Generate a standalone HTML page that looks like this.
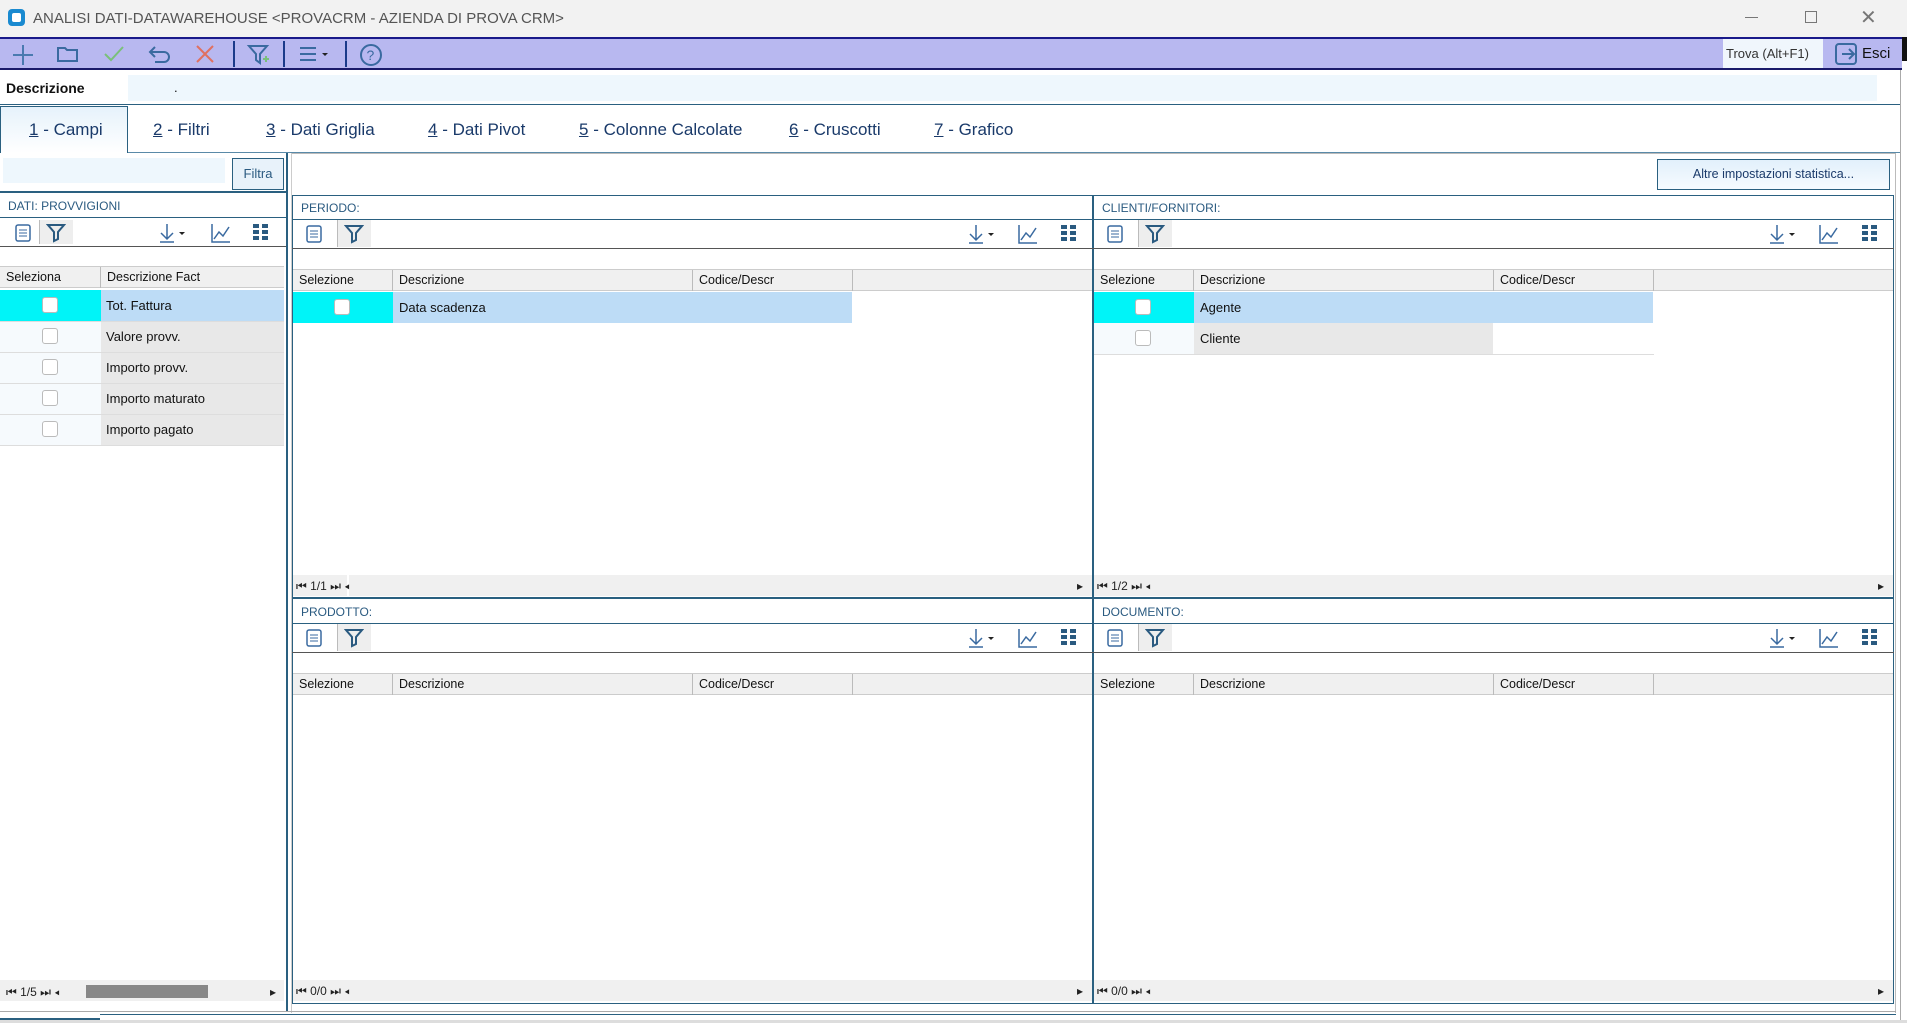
<!DOCTYPE html>
<html><head><meta charset="utf-8"><style>
*{margin:0;padding:0;box-sizing:border-box}
body{width:1907px;height:1023px;overflow:hidden;background:#fff;font-family:"Liberation Sans",sans-serif;font-size:13px;color:#111;position:relative}
.a{position:absolute}
.tb{left:0;top:0;width:1907px;height:37px;background:#f2f2f2}
.tool{left:0;top:37px;width:1902px;height:33px;background:#b8b8f0;border-top:2px solid #1a1a8a;border-bottom:2px solid #1a1a6a}
.tab{top:120px;font-size:17px;color:#1a3a6a}
.panel{border:1px solid #2a6080;background:#fff}
.ph{font-size:12px;color:#2a5a80}
.hd{background:#f0f0f0;border-top:1px solid #ccc;border-bottom:1px solid #ccc;height:22px}
.hc{position:absolute;top:0;height:21px;line-height:21px;padding-left:6px;border-right:1px solid #bbb;font-size:12.5px}
.cb{position:absolute;width:16px;height:16px;border:1px solid #bbb;border-radius:3px;background:#fff}
.nav{font-size:12px;color:#222}
svg{position:absolute}
</style></head><body>
<div class="a tb"></div>
<div class="a" style="left:8px;top:9px;width:17px;height:17px;background:#1a8ad0;border-radius:4px"><div style="margin:4px;width:9px;height:9px;background:#fff;border-radius:2px"></div></div>
<div class="a" style="left:33px;top:10px;font-size:15px;color:#555">ANALISI DATI-DATAWAREHOUSE &lt;PROVACRM - AZIENDA DI PROVA CRM&gt;</div>
<div class="a" style="left:1745px;top:17px;width:13px;height:1px;background:#777"></div>
<div class="a" style="left:1805px;top:11px;width:12px;height:12px;border:1px solid #777"></div>
<div class="a" style="left:1860px;top:5px;font-size:20px;color:#777">✕</div>
<div class="a tool"></div>
<div class="a" style="left:1902px;top:37px;width:5px;height:24px;background:#111"></div>
<div class="a" style="left:1900px;top:70px;width:1px;height:953px;background:#aaa"></div>
<svg style="left:10px;top:42px" width="26" height="26"><path d="M13 3v20M3 13h20" stroke="#4a7ab0" stroke-width="2"/></svg>
<svg style="left:56px;top:44px" width="24" height="20"><path d="M2 4h7l2 2h10v11H2z" fill="none" stroke="#3a6aa0" stroke-width="2"/></svg>
<svg style="left:102px;top:44px" width="24" height="20"><path d="M3 10l6 6 12-13" fill="none" stroke="#7ac07a" stroke-width="2"/></svg>
<svg style="left:147px;top:43px" width="26" height="22"><path d="M8 4L3 9l5 5M3 9h14a5 5 0 010 10H8" fill="none" stroke="#3a6aa0" stroke-width="2"/></svg>
<svg style="left:193px;top:42px" width="24" height="24"><path d="M4 4l16 16M20 4L4 20" stroke="#e07060" stroke-width="2"/></svg>
<div class="a" style="left:233px;top:41px;width:2px;height:26px;background:#1a3a8a"></div>
<svg style="left:246px;top:42px" width="26" height="26"><path d="M3 4h18l-7 8v9l-4-3v-6z" fill="none" stroke="#3a6aa0" stroke-width="2"/><path d="M20 14v6M17 17h6" stroke="#7ac07a" stroke-width="2"/></svg>
<div class="a" style="left:283px;top:41px;width:2px;height:26px;background:#1a3a8a"></div>
<svg style="left:298px;top:44px" width="34" height="20"><path d="M2 4h16M2 10h16M2 16h16" stroke="#3a6aa0" stroke-width="2"/><path d="M24 9h6l-3 3z" fill="#222"/></svg>
<div class="a" style="left:345px;top:41px;width:2px;height:26px;background:#1a3a8a"></div>
<svg style="left:358px;top:42px" width="26" height="26"><circle cx="13" cy="13" r="10" fill="none" stroke="#3a6aa0" stroke-width="2"/><text x="8.5" y="18" font-size="14" fill="#3a6aa0" font-family="Liberation Sans">?</text></svg>
<div class="a" style="left:1723px;top:39px;width:100px;height:29px;background:#f0f6fc;font-size:13px;color:#333;line-height:29px;padding-left:3px">Trova (Alt+F1)</div>
<svg style="left:1834px;top:42px" width="24" height="24"><rect x="2" y="2" width="20" height="20" rx="3" fill="none" stroke="#3a6aa0" stroke-width="2"/><path d="M8 12h12M15 7l5 5-5 5" fill="none" stroke="#3a6aa0" stroke-width="2"/></svg>
<div class="a" style="left:1862px;top:45px;font-size:15px;color:#111">Esci</div>
<div class="a" style="left:0;top:71px;width:1900px;height:34px;border-bottom:1px solid #2a6080"></div>
<div class="a" style="left:6px;top:80px;font-size:14px;font-weight:bold">Descrizione</div>
<div class="a" style="left:128px;top:75px;width:1749px;height:26px;background:#eef7fd"></div>
<div class="a" style="left:174px;top:80px">.</div>
<div class="a" style="left:0;top:106px;width:128px;height:47px;border:1px solid #2a6080;border-bottom:none;background:linear-gradient(#e6f2fb,#fff)"></div>
<div class="a" style="top:152px;height:1px;background:#5a8aa8;left:128px;width:1772px"></div>
<div class="a tab" style="left:29px"><u>1</u> - Campi</div>
<div class="a tab" style="left:153px"><u>2</u> - Filtri</div>
<div class="a tab" style="left:266px"><u>3</u> - Dati Griglia</div>
<div class="a tab" style="left:428px"><u>4</u> - Dati Pivot</div>
<div class="a tab" style="left:579px"><u>5</u> - Colonne Calcolate</div>
<div class="a tab" style="left:789px"><u>6</u> - Cruscotti</div>
<div class="a tab" style="left:934px"><u>7</u> - Grafico</div>
<div class="a" style="left:3px;top:158px;width:196px;height:25px;background:#eef7fd;width:222px"></div>
<div class="a" style="left:232px;top:158px;width:52px;height:32px;border:1px solid #2a6080;background:#e8f2fa;color:#2a5a80;font-size:13px;text-align:center;line-height:30px">Filtra</div>
<div class="a" style="left:0;top:191px;width:287px;height:2px;background:#2a6080"></div>
<div class="a" style="left:286px;top:153px;width:2px;height:858px;background:#2a6080"></div>
<div class="a ph" style="left:8px;top:199px">DATI: PROVVIGIONI</div>
<div class="a" style="left:0;top:217px;width:286px;height:1px;background:#2a6080"></div>
<div class="a" style="left:0;top:246px;width:286px;height:1px;background:#555"></div>
<div class="a" style="left:39px;top:220px;width:34px;height:24px;background:#eee;border-left:1px solid #bbb"></div>
<div class="a hd" style="left:0;top:266px;width:284px"><div class="hc" style="left:0;width:101px">Seleziona</div><div class="hc" style="left:101px;width:183px;border:none">Descrizione Fact</div></div>
<div class="a" style="left:0;top:290px;width:101px;height:31px;background:#00f4f8"></div>
<div class="a" style="left:101px;top:290px;width:183px;height:31px;background:#bddcf6"></div>
<div class="a" style="left:101px;top:321px;width:183px;height:124px;background:#e8e8e8"></div>
<div class="a" style="left:0;top:321px;width:101px;height:124px;background:#f6fafd"></div>
<div class="a" style="left:106px;top:298px">Tot. Fattura</div>
<div class="a" style="left:106px;top:329px">Valore provv.</div>
<div class="a" style="left:106px;top:360px">Importo provv.</div>
<div class="a" style="left:106px;top:391px">Importo maturato</div>
<div class="a" style="left:106px;top:422px">Importo pagato</div>
<div class="cb" style="left:42px;top:297px"></div><div class="cb" style="left:42px;top:328px"></div><div class="cb" style="left:42px;top:359px"></div><div class="cb" style="left:42px;top:390px"></div><div class="cb" style="left:42px;top:421px"></div>
<div class="a" style="left:0;top:321px;width:284px;height:1px;background:#ddd"></div><div class="a" style="left:0;top:352px;width:284px;height:1px;background:#ddd"></div><div class="a" style="left:0;top:383px;width:284px;height:1px;background:#ddd"></div><div class="a" style="left:0;top:414px;width:284px;height:1px;background:#ddd"></div><div class="a" style="left:0;top:445px;width:284px;height:1px;background:#ddd"></div>
<div class="a" style="left:0;top:980px;width:284px;height:21px;background:#f0f0f0"></div>
<div class="a nav" style="left:6px;top:985px">⏮ 1/5 ⏭ ◂</div>
<div class="a" style="left:86px;top:985px;width:122px;height:13px;background:#888"></div>
<div class="a nav" style="left:270px;top:985px">▸</div>
<svg style="left:13px;top:223px" width="20" height="20"><rect x="3" y="2" width="14" height="16" rx="2" fill="none" stroke="#3a6aa0" stroke-width="1.5"/><path d="M6 7h8M6 10h8M6 13h8" stroke="#3a6aa0"/></svg>
<svg style="left:46px;top:222px" width="20" height="22"><path d="M2 3h16l-6 7v7l-4 2v-9z" fill="none" stroke="#2a5a80" stroke-width="2"/></svg>
<svg style="left:158px;top:222px" width="30" height="22"><path d="M9 2v14M3 11l6 6 6-6M2 20h14" fill="none" stroke="#3a6aa0" stroke-width="1.5"/><path d="M21 10h6l-3 3z" fill="#222"/></svg>
<svg style="left:210px;top:222px" width="22" height="22"><path d="M2 2v18h18M4 17l5-7 4 4 6-9" fill="none" stroke="#3a6aa0" stroke-width="1.5"/></svg>
<svg style="left:252px;top:223px" width="18" height="18"><g fill="#2a5a80"><rect x="1" y="1" width="6" height="4"/><rect x="10" y="1" width="6" height="4"/><rect x="1" y="7" width="6" height="4"/><rect x="10" y="7" width="6" height="4"/><rect x="1" y="13" width="6" height="4"/><rect x="10" y="13" width="6" height="4"/></g></svg>
<div class="a" style="left:292px;top:153px;width:1603px;height:1px;background:#bbb"></div>
<div class="a" style="left:1657px;top:159px;width:233px;height:31px;border:1px solid #2a6080;background:linear-gradient(#e2f0fb,#f6fbff);font-size:12.5px;color:#1a3a6a;text-align:center;line-height:29px">Altre impostazioni statistica...</div>
<div class="a" style="left:291px;top:153px;width:1px;height:860px;background:#ccc"></div>
<div class="a" style="left:1895px;top:153px;width:1px;height:860px;background:#bbb"></div>
<div class="a" style="left:0;top:1011px;width:1896px;height:1px;background:#aaa"></div>
<div class="a" style="left:0;top:1018px;width:100px;height:2px;background:#2a6080"></div>
<div class="a" style="left:100px;top:1014px;width:1796px;height:1px;background:#2a6080"></div>
<div class="a" style="left:0;top:1020px;width:1907px;height:3px;background:#ddd"></div>

<div class="a panel" style="left:292px;top:195px;width:801px;height:403px"></div>
<div class="a panel" style="left:1093px;top:195px;width:801px;height:403px"></div>
<div class="a panel" style="left:292px;top:598px;width:801px;height:406px"></div>
<div class="a panel" style="left:1093px;top:598px;width:801px;height:406px"></div>

<div class="a" style="left:292px;top:195px;width:801px;height:403px">
 <div class="a ph" style="left:9px;top:6px">PERIODO:</div>
 <div class="a" style="left:0;top:24px;width:801px;height:1px;background:#2a6080"></div>
 <div class="a" style="left:0;top:53px;width:801px;height:1px;background:#555"></div>
 <div class="a" style="left:45px;top:25px;width:34px;height:27px;background:#eee;border-left:1px solid #bbb"></div>
 <svg style="left:12px;top:29px" width="20" height="20"><rect x="3" y="2" width="14" height="16" rx="2" fill="none" stroke="#3a6aa0" stroke-width="1.5"/><path d="M6 7h8M6 10h8M6 13h8" stroke="#3a6aa0"/></svg>
 <svg style="left:52px;top:28px" width="20" height="22"><path d="M2 3h16l-6 7v7l-4 2v-9z" fill="none" stroke="#2a5a80" stroke-width="2"/></svg>
 <svg style="left:675px;top:28px" width="30" height="22"><path d="M9 2v14M3 11l6 6 6-6M2 20h14" fill="none" stroke="#3a6aa0" stroke-width="1.5"/><path d="M21 10h6l-3 3z" fill="#222"/></svg>
 <svg style="left:725px;top:28px" width="22" height="22"><path d="M2 2v18h18M4 17l5-7 4 4 6-9" fill="none" stroke="#3a6aa0" stroke-width="1.5"/></svg>
 <svg style="left:768px;top:29px" width="18" height="18"><g fill="#2a5a80"><rect x="1" y="1" width="6" height="4"/><rect x="10" y="1" width="6" height="4"/><rect x="1" y="7" width="6" height="4"/><rect x="10" y="7" width="6" height="4"/><rect x="1" y="13" width="6" height="4"/><rect x="10" y="13" width="6" height="4"/></g></svg>
 <div class="a hd" style="left:1px;top:74px;width:799px"><div class="hc" style="left:0;width:100px">Selezione</div><div class="hc" style="left:100px;width:300px">Descrizione</div><div class="hc" style="left:400px;width:160px">Codice/Descr</div></div>
 <div class="a" style="left:1px;top:97px;width:100px;height:31px;background:#00f4f8"></div>
 <div class="a" style="left:101px;top:97px;width:459px;height:31px;background:#bddcf6"></div>
 <div class="cb" style="left:42px;top:104px"></div>
 <div class="a" style="left:107px;top:105px">Data scadenza</div>
 <div class="a" style="left:1px;top:380px;width:799px;height:21px;background:#f0f0f0"></div>
 <div class="a" style="left:55px;top:380px;width:2px;height:21px;background:#fff"></div>
 <div class="a nav" style="left:4px;top:384px">⏮ 1/1 ⏭ ◂</div>
 <div class="a nav" style="left:785px;top:384px">▸</div>
</div>
<div class="a" style="left:1093px;top:195px;width:801px;height:403px">
 <div class="a ph" style="left:9px;top:6px">CLIENTI/FORNITORI:</div>
 <div class="a" style="left:0;top:24px;width:801px;height:1px;background:#2a6080"></div>
 <div class="a" style="left:0;top:53px;width:801px;height:1px;background:#555"></div>
 <div class="a" style="left:45px;top:25px;width:34px;height:27px;background:#eee;border-left:1px solid #bbb"></div>
 <svg style="left:12px;top:29px" width="20" height="20"><rect x="3" y="2" width="14" height="16" rx="2" fill="none" stroke="#3a6aa0" stroke-width="1.5"/><path d="M6 7h8M6 10h8M6 13h8" stroke="#3a6aa0"/></svg>
 <svg style="left:52px;top:28px" width="20" height="22"><path d="M2 3h16l-6 7v7l-4 2v-9z" fill="none" stroke="#2a5a80" stroke-width="2"/></svg>
 <svg style="left:675px;top:28px" width="30" height="22"><path d="M9 2v14M3 11l6 6 6-6M2 20h14" fill="none" stroke="#3a6aa0" stroke-width="1.5"/><path d="M21 10h6l-3 3z" fill="#222"/></svg>
 <svg style="left:725px;top:28px" width="22" height="22"><path d="M2 2v18h18M4 17l5-7 4 4 6-9" fill="none" stroke="#3a6aa0" stroke-width="1.5"/></svg>
 <svg style="left:768px;top:29px" width="18" height="18"><g fill="#2a5a80"><rect x="1" y="1" width="6" height="4"/><rect x="10" y="1" width="6" height="4"/><rect x="1" y="7" width="6" height="4"/><rect x="10" y="7" width="6" height="4"/><rect x="1" y="13" width="6" height="4"/><rect x="10" y="13" width="6" height="4"/></g></svg>
 <div class="a hd" style="left:1px;top:74px;width:799px"><div class="hc" style="left:0;width:100px">Selezione</div><div class="hc" style="left:100px;width:300px">Descrizione</div><div class="hc" style="left:400px;width:160px">Codice/Descr</div></div>
 <div class="a" style="left:1px;top:97px;width:100px;height:31px;background:#00f4f8"></div>
 <div class="a" style="left:101px;top:97px;width:459px;height:31px;background:#bddcf6"></div>
 <div class="a" style="left:101px;top:128px;width:299px;height:31px;background:#e8e8e8"></div>
 <div class="a" style="left:1px;top:128px;width:100px;height:31px;background:#f6fafd"></div>
 <div class="a" style="left:1px;top:159px;width:560px;height:1px;background:#ddd"></div>
 <div class="cb" style="left:42px;top:104px"></div><div class="cb" style="left:42px;top:135px"></div>
 <div class="a" style="left:107px;top:105px">Agente</div>
 <div class="a" style="left:107px;top:136px">Cliente</div>
 <div class="a" style="left:1px;top:380px;width:799px;height:21px;background:#f0f0f0"></div>
 <div class="a nav" style="left:4px;top:384px">⏮ 1/2 ⏭ ◂</div>
 <div class="a nav" style="left:785px;top:384px">▸</div>
</div>
<div class="a" style="left:292px;top:598px;width:801px;height:406px">
 <div class="a ph" style="left:9px;top:7px">PRODOTTO:</div>
 <div class="a" style="left:0;top:25px;width:801px;height:1px;background:#2a6080"></div>
 <div class="a" style="left:0;top:54px;width:801px;height:1px;background:#555"></div>
 <div class="a" style="left:45px;top:26px;width:34px;height:27px;background:#eee;border-left:1px solid #bbb"></div>
 <svg style="left:12px;top:30px" width="20" height="20"><rect x="3" y="2" width="14" height="16" rx="2" fill="none" stroke="#3a6aa0" stroke-width="1.5"/><path d="M6 7h8M6 10h8M6 13h8" stroke="#3a6aa0"/></svg>
 <svg style="left:52px;top:29px" width="20" height="22"><path d="M2 3h16l-6 7v7l-4 2v-9z" fill="none" stroke="#2a5a80" stroke-width="2"/></svg>
 <svg style="left:675px;top:29px" width="30" height="22"><path d="M9 2v14M3 11l6 6 6-6M2 20h14" fill="none" stroke="#3a6aa0" stroke-width="1.5"/><path d="M21 10h6l-3 3z" fill="#222"/></svg>
 <svg style="left:725px;top:29px" width="22" height="22"><path d="M2 2v18h18M4 17l5-7 4 4 6-9" fill="none" stroke="#3a6aa0" stroke-width="1.5"/></svg>
 <svg style="left:768px;top:30px" width="18" height="18"><g fill="#2a5a80"><rect x="1" y="1" width="6" height="4"/><rect x="10" y="1" width="6" height="4"/><rect x="1" y="7" width="6" height="4"/><rect x="10" y="7" width="6" height="4"/><rect x="1" y="13" width="6" height="4"/><rect x="10" y="13" width="6" height="4"/></g></svg>
 <div class="a hd" style="left:1px;top:75px;width:799px"><div class="hc" style="left:0;width:100px">Selezione</div><div class="hc" style="left:100px;width:300px">Descrizione</div><div class="hc" style="left:400px;width:160px">Codice/Descr</div></div>
 <div class="a" style="left:1px;top:382px;width:799px;height:21px;background:#f0f0f0"></div>
 <div class="a nav" style="left:4px;top:386px">⏮ 0/0 ⏭ ◂</div>
 <div class="a nav" style="left:785px;top:386px">▸</div>
</div>
<div class="a" style="left:1093px;top:598px;width:801px;height:406px">
 <div class="a ph" style="left:9px;top:7px">DOCUMENTO:</div>
 <div class="a" style="left:0;top:25px;width:801px;height:1px;background:#2a6080"></div>
 <div class="a" style="left:0;top:54px;width:801px;height:1px;background:#555"></div>
 <div class="a" style="left:45px;top:26px;width:34px;height:27px;background:#eee;border-left:1px solid #bbb"></div>
 <svg style="left:12px;top:30px" width="20" height="20"><rect x="3" y="2" width="14" height="16" rx="2" fill="none" stroke="#3a6aa0" stroke-width="1.5"/><path d="M6 7h8M6 10h8M6 13h8" stroke="#3a6aa0"/></svg>
 <svg style="left:52px;top:29px" width="20" height="22"><path d="M2 3h16l-6 7v7l-4 2v-9z" fill="none" stroke="#2a5a80" stroke-width="2"/></svg>
 <svg style="left:675px;top:29px" width="30" height="22"><path d="M9 2v14M3 11l6 6 6-6M2 20h14" fill="none" stroke="#3a6aa0" stroke-width="1.5"/><path d="M21 10h6l-3 3z" fill="#222"/></svg>
 <svg style="left:725px;top:29px" width="22" height="22"><path d="M2 2v18h18M4 17l5-7 4 4 6-9" fill="none" stroke="#3a6aa0" stroke-width="1.5"/></svg>
 <svg style="left:768px;top:30px" width="18" height="18"><g fill="#2a5a80"><rect x="1" y="1" width="6" height="4"/><rect x="10" y="1" width="6" height="4"/><rect x="1" y="7" width="6" height="4"/><rect x="10" y="7" width="6" height="4"/><rect x="1" y="13" width="6" height="4"/><rect x="10" y="13" width="6" height="4"/></g></svg>
 <div class="a hd" style="left:1px;top:75px;width:799px"><div class="hc" style="left:0;width:100px">Selezione</div><div class="hc" style="left:100px;width:300px">Descrizione</div><div class="hc" style="left:400px;width:160px">Codice/Descr</div></div>
 <div class="a" style="left:1px;top:382px;width:799px;height:21px;background:#f0f0f0"></div>
 <div class="a nav" style="left:4px;top:386px">⏮ 0/0 ⏭ ◂</div>
 <div class="a nav" style="left:785px;top:386px">▸</div>
</div>
</body></html>
